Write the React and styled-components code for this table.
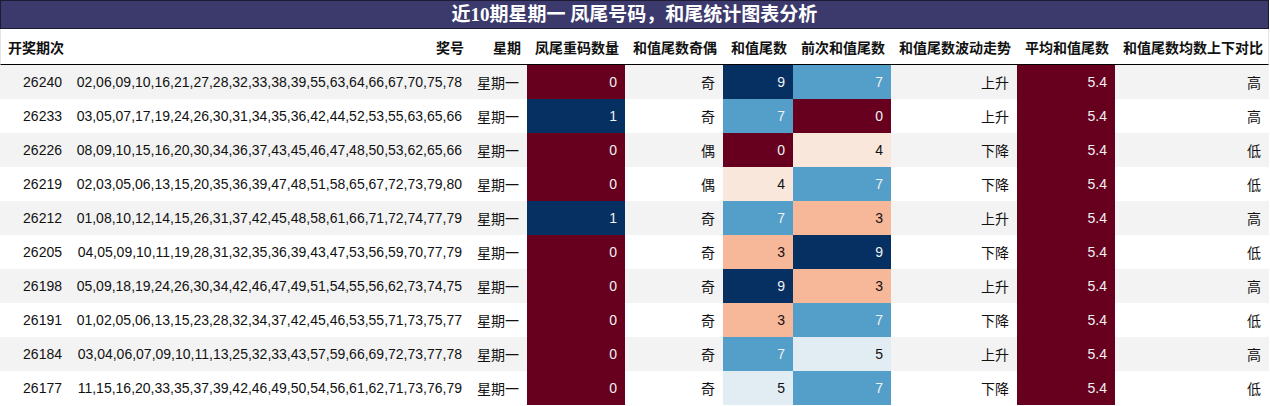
import React from "react";
import styled, { createGlobalStyle } from "styled-components";

const GlobalStyle = createGlobalStyle`
  body {
    margin: 0;
    background: #ffffff;
    font-family: "Liberation Sans", "Noto Sans CJK SC", sans-serif;
  }
`;

const COLS = "70px 400px 57px 98px 98px 70px 98px 126px 98px 154px";

const Wrap = styled.div`
  width: 1269px;
`;

const TitleBar = styled.div`
  height: 27px;
  background: #3c3a6c;
  border: 1px solid #1c1b33;
  color: #ffffff;
  font-family: "Liberation Serif", "Noto Sans CJK SC", serif;
  font-weight: bold;
  font-size: 19px;
  line-height: 27px;
  text-align: center;
`;

const HeadRow = styled.div`
  display: grid;
  grid-template-columns: ${COLS};
  box-sizing: border-box;
  height: 36px;
  border-bottom: 1px solid #000000;
  border-left: 1px solid #e4e4e4;
  border-right: 1px solid #e4e4e4;
`;

const HeadCell = styled.div`
  display: flex;
  align-items: center;
  justify-content: ${(p) => (p.left ? "flex-start" : "flex-end")};
  padding: 0 7px;
  font-family: "Noto Sans CJK SC", sans-serif;
  font-weight: bold;
  font-size: 14px;
  color: #111111;
  white-space: nowrap;
`;

const Row = styled.div`
  display: grid;
  grid-template-columns: ${COLS};
  height: 34px;
  background: ${(p) => (p.odd ? "#f3f3f3" : "#ffffff")};
`;

const Cell = styled.div`
  display: flex;
  align-items: center;
  justify-content: flex-end;
  padding: 0 8px;
  font-size: 14px;
  color: ${(p) => p.fg || "#111111"};
  background: ${(p) => p.bg || "transparent"};
  white-space: nowrap;
`;

const CjkCell = styled(Cell)`
  font-family: "Noto Sans CJK SC", sans-serif;
`;

// RdBu colours for values 0..9: [background, text]
const scale = {
  0: ["#67001f", "#f1f1f1"],
  1: ["#053061", "#f1f1f1"],
  3: ["#f7b799", "#111111"],
  4: ["#fae7dc", "#111111"],
  5: ["#e2edf3", "#111111"],
  7: ["#549fc9", "#f1f1f1"],
  9: ["#053061", "#f1f1f1"],
};

const headers = [
  "开奖期次",
  "奖号",
  "星期",
  "凤尾重码数量",
  "和值尾数奇偶",
  "和值尾数",
  "前次和值尾数",
  "和值尾数波动走势",
  "平均和值尾数",
  "和值尾数均数上下对比",
];

const rows = [
  ["26240", "02,06,09,10,16,21,27,28,32,33,38,39,55,63,64,66,67,70,75,78", 0, "奇", 9, 7, "上升", "高"],
  ["26233", "03,05,07,17,19,24,26,30,31,34,35,36,42,44,52,53,55,63,65,66", 1, "奇", 7, 0, "上升", "高"],
  ["26226", "08,09,10,15,16,20,30,34,36,37,43,45,46,47,48,50,53,62,65,66", 0, "偶", 0, 4, "下降", "低"],
  ["26219", "02,03,05,06,13,15,20,35,36,39,47,48,51,58,65,67,72,73,79,80", 0, "偶", 4, 7, "下降", "低"],
  ["26212", "01,08,10,12,14,15,26,31,37,42,45,48,58,61,66,71,72,74,77,79", 1, "奇", 7, 3, "上升", "高"],
  ["26205", "04,05,09,10,11,19,28,31,32,35,36,39,43,47,53,56,59,70,77,79", 0, "奇", 3, 9, "下降", "低"],
  ["26198", "05,09,18,19,24,26,30,34,42,46,47,49,51,54,55,56,62,73,74,75", 0, "奇", 9, 3, "上升", "高"],
  ["26191", "01,02,05,06,13,15,23,28,32,34,37,42,45,46,53,55,71,73,75,77", 0, "奇", 3, 7, "下降", "低"],
  ["26184", "03,04,06,07,09,10,11,13,25,32,33,43,57,59,66,69,72,73,77,78", 0, "奇", 7, 5, "上升", "高"],
  ["26177", "11,15,16,20,33,35,37,39,42,46,49,50,54,56,61,62,71,73,76,79", 0, "奇", 5, 7, "下降", "低"],
];

function Heat({ value }) {
  const [bg, fg] = scale[value];
  return (
    <Cell bg={bg} fg={fg}>
      {value}
    </Cell>
  );
}

export default function App() {
  return (
    <Wrap>
      <GlobalStyle />
      <TitleBar>近10期星期一 凤尾号码，和尾统计图表分析</TitleBar>
      <HeadRow>
        {headers.map((h, i) => (
          <HeadCell key={h} left={i === 0}>
            {h}
          </HeadCell>
        ))}
      </HeadRow>
      {rows.map((r, i) => (
        <Row key={r[0]} odd={i % 2 === 0}>
          <Cell>{r[0]}</Cell>
          <Cell>{r[1]}</Cell>
          <CjkCell>星期一</CjkCell>
          <Heat value={r[2]} />
          <CjkCell>{r[3]}</CjkCell>
          <Heat value={r[4]} />
          <Heat value={r[5]} />
          <CjkCell>{r[6]}</CjkCell>
          <Cell bg="#67001f" fg="#f1f1f1">
            5.4
          </Cell>
          <CjkCell>{r[7]}</CjkCell>
        </Row>
      ))}
    </Wrap>
  );
}
